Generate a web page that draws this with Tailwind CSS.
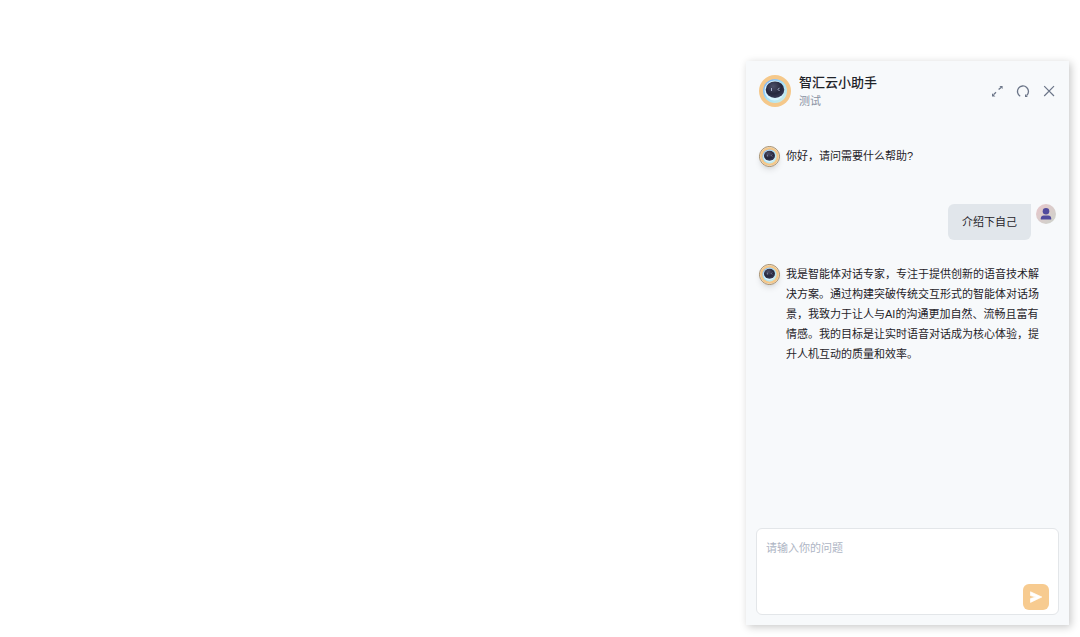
<!DOCTYPE html>
<html lang="zh-CN">
<head>
<meta charset="utf-8">
<meta name="viewport" content="width=device-width, initial-scale=1">
<title>智汇云小助手</title>
<script src="https://cdn.jsdelivr.net/npm/@tailwindcss/browser@4"></script>
</head>
<body class="bg-white font-['Liberation_Sans','Noto_Sans_CJK_SC',sans-serif] text-[#1f2329]">
<svg class="absolute size-0" aria-hidden="true">
  <defs>
    <linearGradient id="halo" x1="0" y1="0" x2="1" y2="1">
      <stop offset="0" stop-color="#6fa2f2"/><stop offset=".5" stop-color="#a6e2fb"/><stop offset="1" stop-color="#d5eee0"/>
    </linearGradient>
    <radialGradient id="head" cx=".4" cy=".3" r=".75">
      <stop offset="0" stop-color="#4d4f69"/><stop offset=".6" stop-color="#25273d"/><stop offset="1" stop-color="#3a3d59"/>
    </radialGradient>
    <symbol id="robot" viewBox="0 0 32 32">
      <circle cx="16" cy="16" r="16" fill="#f5c88a"/>
      <circle cx="16" cy="16" r="12" fill="url(#halo)"/>
      <circle cx="15.5" cy="15.5" r="10" fill="#d9f4fe"/>
      <ellipse cx="16" cy="14.7" rx="9.3" ry="8.3" fill="url(#head)"/>
      <path d="M12.5 13v3" stroke="#a9b2ce" stroke-width="1" fill="none"/>
      <path d="M20.5 12.8l-1.5 1.6 1.5 1.6" stroke="#a9b2ce" stroke-width="1" fill="none"/>
    </symbol>
  </defs>
</svg>
<main class="flex min-h-screen justify-end pt-[61px] pr-[11px] pb-3">
  <section class="flex w-[323px] max-w-full flex-col bg-[#f7f9fb] shadow-[2px_2px_8px_rgba(0,0,0,0.22)]" aria-label="智汇云小助手">
    <header class="flex items-center px-[13px] pt-3">
      <svg class="size-8 shrink-0" role="img" aria-label="助手头像"><use href="#robot"/></svg>
      <div class="ml-2 grow">
        <h1 class="text-[13px] leading-5 font-medium">智汇云小助手</h1>
        <p class="text-[11px] leading-4 text-[#8a93a3]">测试</p>
      </div>
      <div class="flex gap-3 text-[#6b7588]">
        <button type="button" aria-label="展开" class="flex size-[14px] items-center justify-center">
          <svg class="size-[14px]" viewBox="0 0 14 14" fill="none" stroke="currentColor" stroke-width="1.3"><path d="M8.6 5.6l2.4-2.2M6 8.2l-2.4 2.4"/><path d="M9.4 2h3.2v3zM2 9.2v3.2h3.4z" fill="currentColor" stroke="none"/></svg>
        </button>
        <button type="button" aria-label="重新开始" class="flex size-[14px] items-center justify-center">
          <svg class="size-[14px]" viewBox="0 0 14 14" fill="none" stroke="currentColor" stroke-width="1.3"><path d="M4.2 12.2A5.5 5.5 0 1 1 10.6 11.6"/><path d="M9 10v3h2.8z" fill="currentColor" stroke="none"/></svg>
        </button>
        <button type="button" aria-label="关闭" class="flex size-[14px] items-center justify-center">
          <svg class="size-[14px]" viewBox="0 0 14 14" fill="none" stroke="currentColor" stroke-width="1.2"><path d="M2.2 2.2l9.8 9.8M12 2.2l-9.8 9.8"/></svg>
        </button>
      </div>
    </header>

    <div class="flex grow flex-col px-[13px] pt-[37px] text-[11px] leading-5">
      <div class="flex gap-[6px]">
        <svg class="size-[21px] shrink-0 rounded-full border border-[#a08660] shadow-md" aria-hidden="true"><use href="#robot"/></svg>
        <p>你好，请问需要什么帮助?</p>
      </div>
      <div class="mt-[37px] flex justify-end gap-[5px]">
        <p class="rounded-md rounded-tr-none bg-[#e1e6eb] px-[14px] py-2">介绍下自己</p>
        <svg class="size-5 shrink-0" viewBox="0 0 20 20" role="img" aria-label="用户">
          <defs><linearGradient id="user" x1="0" y1="0" x2="1" y2="1"><stop offset="0" stop-color="#e8c6cb"/><stop offset="1" stop-color="#ccd3cb"/></linearGradient></defs>
          <circle cx="10" cy="10" r="10" fill="url(#user)"/>
          <circle cx="10" cy="7.2" r="3.3" fill="#514a9d"/>
          <path d="M4.8 15.4v-1.2c0-1.7 1.2-2.8 2.8-2.8h4.8c1.6 0 2.8 1.1 2.8 2.8v1.2z" fill="#514a9d"/>
        </svg>
      </div>
      <div class="mt-6 flex gap-[6px]">
        <svg class="size-[21px] shrink-0 rounded-full border border-[#a08660] shadow-md" aria-hidden="true"><use href="#robot"/></svg>
        <p class="max-w-[260px]">我是智能体对话专家，专注于提供创新的语音技术解决方案。通过构建突破传统交互形式的智能体对话场景，我致力于让人与AI的沟通更加自然、流畅且富有情感。我的目标是让实时语音对话成为核心体验，提升人机互动的质量和效率。</p>
      </div>
    </div>

    <form class="mx-[10px] mb-[10px] flex h-[87px] flex-col rounded-md border border-[#e3e6e9] bg-white px-[9px] pb-1">
      <textarea aria-label="请输入你的问题" placeholder="请输入你的问题" class="w-full grow resize-none pt-[9px] text-[11px] leading-5 outline-none placeholder:text-[#aeb5c4]"></textarea>
      <button type="button" aria-label="发送" class="flex size-[26px] shrink-0 items-center justify-center self-end rounded-md bg-[#f7cb90]">
        <svg class="size-4" viewBox="0 0 16 16" fill="#fff" stroke="#fff" stroke-width=".7" stroke-linejoin="round"><path d="M2.5 2.8L13.8 8 2.5 13.4V9.6L8 8 2.5 6.6z"/></svg>
      </button>
    </form>
  </section>
</main>
</body>
</html>
